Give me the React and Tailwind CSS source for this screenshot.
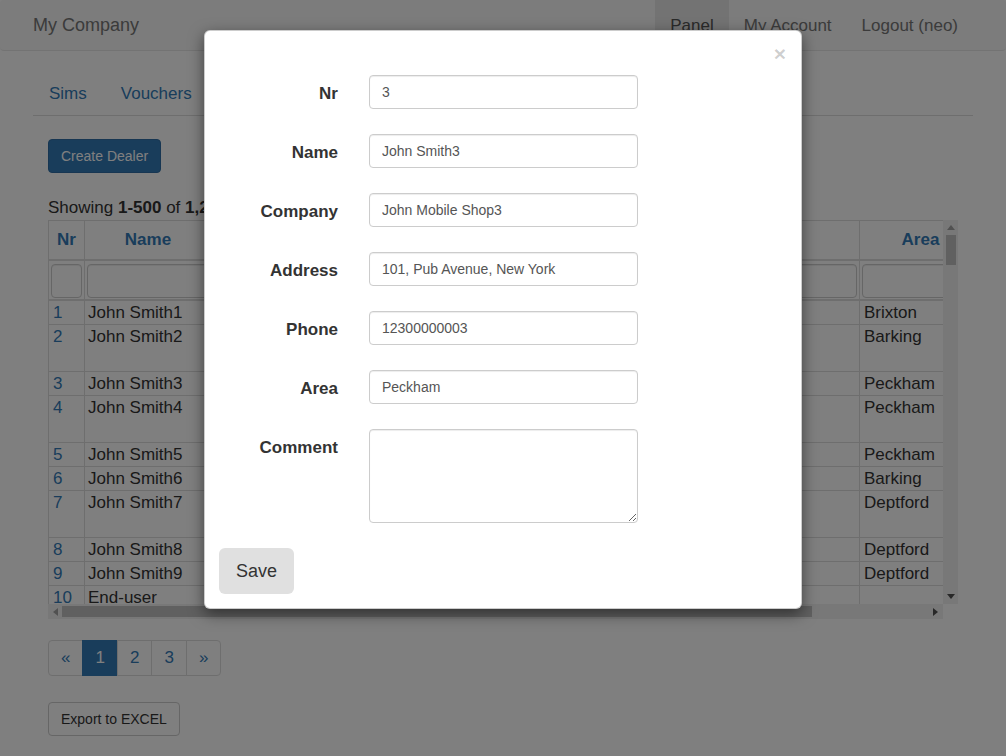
import React from 'react';

const rows = [
  { nr: 1, name: 'John Smith1', company: 'John Mobile Shop1', address: '101, Pub Avenue', phone: '12300000001', area: 'Brixton', h: 'h-[24px]' },
  { nr: 2, name: 'John Smith2', company: 'John Mobile Shop2', address: '102, Pub Avenue, New York', phone: '12300000002', area: 'Barking', h: 'h-[47px]' },
  { nr: 3, name: 'John Smith3', company: 'John Mobile Shop3', address: '101, Pub Avenue', phone: '12300000003', area: 'Peckham', h: 'h-[24px]' },
  { nr: 4, name: 'John Smith4', company: 'John Mobile Shop4', address: '104, Pub Avenue, New York', phone: '12300000004', area: 'Peckham', h: 'h-[47px]' },
  { nr: 5, name: 'John Smith5', company: 'John Mobile Shop5', address: '105, Pub Avenue', phone: '12300000005', area: 'Peckham', h: 'h-[24px]' },
  { nr: 6, name: 'John Smith6', company: 'John Mobile Shop6', address: '106, Pub Avenue', phone: '12300000006', area: 'Barking', h: 'h-[24px]' },
  { nr: 7, name: 'John Smith7', company: 'John Mobile Shop7', address: '107, Pub Avenue, New York', phone: '12300000007', area: 'Deptford', h: 'h-[47px]' },
  { nr: 8, name: 'John Smith8', company: 'John Mobile Shop8', address: '108, Pub Avenue', phone: '12300000008', area: 'Deptford', h: 'h-[24px]' },
  { nr: 9, name: 'John Smith9', company: 'John Mobile Shop9', address: '109, Pub Avenue', phone: '12300000009', area: 'Deptford', h: 'h-[24px]' },
  { nr: 10, name: 'End-user', company: '', address: '', phone: '', area: '', h: 'h-[24px]' },
];

const cellBase = 'shrink-0 border-r border-[#ddd] overflow-hidden';
const W = {
  nr: 'w-[36px]',
  name: 'w-[127px]',
  company: 'w-[190px]',
  address: 'w-[218px]',
  phone: 'w-[240px]',
  area: 'w-[122px]',
};

function FilterInput() {
  return (
    <div className="w-full h-[34px] rounded-[4px] border border-[#ccc] bg-white shadow-[inset_0_1px_1px_rgba(0,0,0,0.075)]" />
  );
}

function Field({ label, value }) {
  return (
    <div className="flex items-start gap-[31px]">
      <label className="w-[119px] shrink-0 text-right pt-[7px] leading-[24px] font-bold text-[17px] text-[#333]">{label}</label>
      <input
        readOnly
        value={value}
        className="w-[269px] h-[34px] px-[12px] rounded-[4px] border border-[#ccc] bg-white text-[14px] text-[#555] shadow-[inset_0_1px_1px_rgba(0,0,0,0.075)] outline-none font-['Liberation_Sans',Arial,sans-serif]"
      />
    </div>
  );
}

export default function App() {
  return (
    <div className="relative w-[1006px] h-[756px] overflow-hidden bg-white font-['Liberation_Sans',Arial,sans-serif] text-[17px] text-[#333]">
      {/* Navbar */}
      <div className="h-[51px] bg-[#f8f8f8] border-b border-[#e7e7e7] rounded-[4px] mb-[20px]">
        <div className="w-[940px] mx-auto flex items-stretch justify-between h-[50px]">
          <div className="flex items-center pt-[1px] text-[18px] text-[#777]">My Company</div>
          <div className="flex">
            <div className="px-[15px] pt-[1px] flex items-center bg-[#e7e7e7] text-[#555]">Panel</div>
            <div className="px-[15px] pt-[1px] flex items-center text-[#777]">My Account</div>
            <div className="px-[15px] pt-[1px] flex items-center text-[#777]">Logout (neo)</div>
          </div>
        </div>
      </div>

      <div className="w-[940px] mx-auto">
        {/* Tabs */}
        <div className="flex border-b border-[#ddd] h-[45px]">
          <div className="ml-px mr-[4px] px-[15px] pt-[11px] pb-[9px] leading-[24px] text-[#337ab7]">Sims</div>
          <div className="mr-[2px] px-[15px] pt-[11px] pb-[9px] leading-[24px] text-[#337ab7]">Vouchers</div>
          <div className="mr-[2px] px-[15px] pt-[11px] pb-[9px] leading-[24px] text-[#555] bg-white border border-[#ddd] border-b-transparent rounded-t-[4px] h-[45px]">Dealers</div>
          <div className="mr-[2px] px-[15px] pt-[11px] pb-[9px] leading-[24px] text-[#337ab7]">Reports</div>
        </div>

        <div className="px-[15px] pt-[23px]">
          <button className="h-[34px] px-[12px] rounded-[4px] bg-[#337ab7] border border-[#2e6da4] text-white text-[14px]">Create Dealer</button>

          <div className="mt-[23px] leading-[24px]">
            Showing <b>1-500</b> of <b>1,234</b> items.
          </div>

          {/* Table with scrollbars */}
          <div className="w-[910px]">
            <div className="flex">
              <div className="w-[895px] h-[384px] overflow-hidden border-l border-t border-[#ddd]">
                <div className="w-max">
                  {/* Header */}
                  <div className="flex h-[40px] border-b-2 border-[#ddd] font-bold text-[#337ab7]">
                    <div className={`${cellBase} ${W.nr} flex items-center justify-center`}>Nr</div>
                    <div className={`${cellBase} ${W.name} flex items-center justify-center`}>Name</div>
                    <div className={`${cellBase} ${W.company} flex items-center justify-center`}>Company</div>
                    <div className={`${cellBase} ${W.address} flex items-center justify-center`}>Address</div>
                    <div className={`${cellBase} ${W.phone} flex items-center justify-center`}>Phone</div>
                    <div className={`${cellBase} ${W.area} flex items-center justify-center`}>Area</div>
                  </div>
                  {/* Filter */}
                  <div className="flex h-[40px] border-b-2 border-[#ddd]">
                    <div className={`${cellBase} ${W.nr} px-[2px] pt-[3px]`}><FilterInput /></div>
                    <div className={`${cellBase} ${W.name} px-[2px] pt-[3px]`}><FilterInput /></div>
                    <div className={`${cellBase} ${W.company} px-[2px] pt-[3px]`}><FilterInput /></div>
                    <div className={`${cellBase} ${W.address} px-[2px] pt-[3px]`}><FilterInput /></div>
                    <div className={`${cellBase} ${W.phone} px-[2px] pt-[3px]`}><FilterInput /></div>
                    <div className={`${cellBase} ${W.area} px-[2px] pt-[3px]`}><FilterInput /></div>
                  </div>
                  {rows.map((r) => (
                    <div key={r.nr} className={`flex ${r.h} border-b border-[#ddd] leading-[23px]`}>
                      <div className={`${cellBase} ${W.nr} px-[4px] text-[#337ab7]`}>{r.nr}</div>
                      <div className={`${cellBase} ${W.name} px-[3px]`}>{r.name}</div>
                      <div className={`${cellBase} ${W.company} px-[4px]`}>{r.company}</div>
                      <div className={`${cellBase} ${W.address} px-[4px]`}>{r.address}</div>
                      <div className={`${cellBase} ${W.phone} px-[4px]`}>{r.phone}</div>
                      <div className={`${cellBase} ${W.area} px-[4px]`}>{r.area}</div>
                    </div>
                  ))}
                </div>
              </div>
              {/* Vertical scrollbar */}
              <div className="w-[15px] h-[384px] bg-[#f1f1f1] flex flex-col items-center">
                <div className="h-[15px] w-full flex items-center justify-center">
                  <svg width="8" height="5" viewBox="0 0 8 5"><path d="M0 5 L4 0 L8 5 Z" fill="#a3a3a3" /></svg>
                </div>
                <div className="w-[10px] h-[30px] bg-[#c1c1c1]" />
                <div className="flex-1" />
                <div className="h-[15px] w-full flex items-center justify-center">
                  <svg width="8" height="5" viewBox="0 0 8 5"><path d="M0 0 L8 0 L4 5 Z" fill="#505050" /></svg>
                </div>
              </div>
            </div>
            {/* Horizontal scrollbar */}
            <div className="w-[895px] h-[15px] bg-[#f1f1f1] flex items-center">
              <div className="w-[14px] h-full flex items-center justify-center">
                <svg width="5" height="8" viewBox="0 0 5 8"><path d="M5 0 L0 4 L5 8 Z" fill="#a3a3a3" /></svg>
              </div>
              <div className="w-[750px] h-[11px] bg-[#c1c1c1]" />
              <div className="flex-1" />
              <div className="w-[15px] h-full flex items-center justify-center">
                <svg width="5" height="8" viewBox="0 0 5 8"><path d="M0 0 L5 4 L0 8 Z" fill="#505050" /></svg>
              </div>
            </div>
          </div>

          {/* Pagination */}
          <div className="mt-[21px] flex h-[36px]">
            <div className="px-[12px] flex items-center border border-[#ddd] rounded-l-[4px] text-[#337ab7] bg-white">«</div>
            <div className="-ml-px px-[12px] flex items-center border border-[#337ab7] bg-[#337ab7] text-white">1</div>
            <div className="-ml-px px-[12px] flex items-center border border-[#ddd] text-[#337ab7] bg-white">2</div>
            <div className="-ml-px px-[12px] flex items-center border border-[#ddd] text-[#337ab7] bg-white">3</div>
            <div className="-ml-px px-[12px] flex items-center border border-[#ddd] rounded-r-[4px] text-[#337ab7] bg-white">»</div>
          </div>

          <button className="mt-[26px] h-[34px] px-[12px] rounded-[4px] border border-[#ccc] bg-white text-[14px] text-[#333]">Export to EXCEL</button>
        </div>
      </div>

      {/* Backdrop */}
      <div className="absolute inset-0 bg-black/50" />

      {/* Modal */}
      <div className="absolute left-[204px] top-[30px] w-[598px] h-[579px] bg-white rounded-[6px] border border-black/20 shadow-[0_5px_15px_rgba(0,0,0,0.5)] p-[14px]">
        <span className="absolute right-[15px] top-[12px] text-[21px] font-bold leading-none text-black/20">×</span>
        <div className="mt-[30px] flex flex-col gap-[25px]">
          <Field label="Nr" value="3" />
          <Field label="Name" value="John Smith3" />
          <Field label="Company" value="John Mobile Shop3" />
          <Field label="Address" value="101, Pub Avenue, New York" />
          <Field label="Phone" value="12300000003" />
          <Field label="Area" value="Peckham" />
          <div className="flex items-start gap-[31px]">
            <label className="w-[119px] shrink-0 text-right pt-[7px] leading-[24px] font-bold text-[17px] text-[#333]">Comment</label>
            <textarea
              readOnly
              rows={4}
              className="w-[269px] h-[94px] px-[12px] py-[6px] rounded-[4px] border border-[#ccc] bg-white text-[14px] text-[#555] shadow-[inset_0_1px_1px_rgba(0,0,0,0.075)] outline-none"
            />
          </div>
        </div>
        <button className="mt-[25px] h-[46px] px-[17px] rounded-[6px] bg-[#e0e0e0] text-[18px] text-[#333]">Save</button>
      </div>
    </div>
  );
}
